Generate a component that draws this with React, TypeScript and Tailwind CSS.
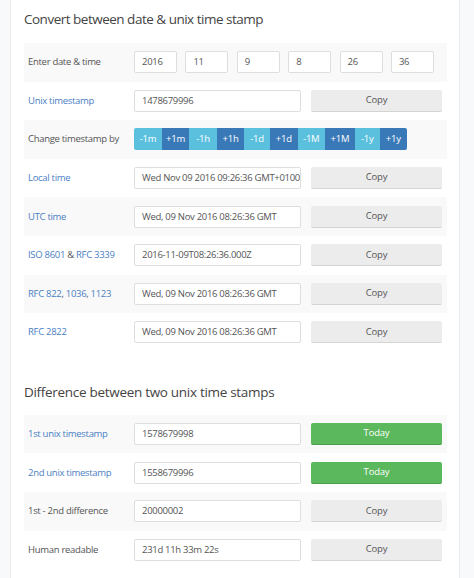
import React from 'react';

const font = { fontFamily: '"Open Sans", "Liberation Sans", sans-serif' };

const steps = [
  { label: '-1m', w: 'w-[28px]', dark: false },
  { label: '+1m', w: 'w-[27px]', dark: true },
  { label: '-1h', w: 'w-[28px]', dark: false },
  { label: '+1h', w: 'w-[27px]', dark: true },
  { label: '-1d', w: 'w-[26px]', dark: false },
  { label: '+1d', w: 'w-[27.5px]', dark: true },
  { label: '-1M', w: 'w-[27.5px]', dark: false },
  { label: '+1M', w: 'w-[30px]', dark: true },
  { label: '-1y', w: 'w-[24.5px]', dark: false },
  { label: '+1y', w: 'w-[27.5px]', dark: true },
];

const Row: React.FC<{ gray?: boolean; label: React.ReactNode; children: React.ReactNode }> = ({ gray, label, children }) => (
  <div className={`flex items-center h-[38.6px] ${gray ? 'bg-[#f9f9f9]' : 'bg-white'}`}>
    <div className="w-[110px] pl-[4px] text-[9.5px] tracking-[-0.3px] text-[#555] whitespace-nowrap">{label}</div>
    {children}
  </div>
);

const Field: React.FC<{ value: string }> = ({ value }) => (
  <div className="w-[167px] h-[22px] flex items-center pl-[7px] bg-white border border-[#dedede] rounded-[2px] text-[9.5px] tracking-[-0.3px] text-[#555] whitespace-nowrap overflow-hidden">
    {value}
  </div>
);

const Btn: React.FC<{ text: string; green?: boolean }> = ({ text, green }) => (
  <div
    className={`ml-[10px] w-[131px] h-[22px] flex items-center justify-center rounded-[2px] text-[9.5px] tracking-[-0.2px] border-b ${
      green ? 'bg-[#5cb85c] border-[#4a9d4a] text-white' : 'bg-[#ececec] border-[#d4d4d4] text-[#555]'
    }`}
  >
    {text}
  </div>
);

const A: React.FC<{ children: React.ReactNode }> = ({ children }) => (
  <span className="text-[#4a80c4]">{children}</span>
);

export default function App() {
  const dateParts = ['2016', '11', '9', '8', '26', '36'];
  return (
    <div className="min-h-[578px] bg-[#f8f9fb] pl-[10px]" style={font}>
      <div className="w-[450px] min-h-[578px] bg-white border-x border-[#ececec] pl-[13px] pr-[12px]">
        <h2 className="pt-[9px] h-[43px] text-[13.5px] tracking-[-0.5px] leading-[20px] text-[#444]">Convert between date &amp; unix time stamp</h2>
        <div>
          <Row gray label="Enter date & time">
            <div className="flex gap-[8.4px]">
              {dateParts.map((p, i) => (
                <div key={i} className="w-[43px] h-[22px] flex items-center pl-[7px] bg-white border border-[#dedede] rounded-[2px] text-[9.5px] tracking-[-0.3px] text-[#555]">
                  {p}
                </div>
              ))}
            </div>
          </Row>
          <Row label={<A>Unix timestamp</A>}>
            <Field value="1478679996" />
            <Btn text="Copy" />
          </Row>
          <Row gray label="Change timestamp by">
            <div className="flex h-[22px] rounded-[2px] overflow-hidden">
              {steps.map((s) => (
                <div
                  key={s.label}
                  className={`${s.w} flex items-center justify-center text-[9.5px] tracking-[-0.2px] text-white ${s.dark ? 'bg-[#3a79b8]' : 'bg-[#5bc0de]'}`}
                >
                  {s.label}
                </div>
              ))}
            </div>
          </Row>
          <Row label={<A>Local time</A>}>
            <Field value="Wed Nov 09 2016 09:26:36 GMT+0100" />
            <Btn text="Copy" />
          </Row>
          <Row gray label={<A>UTC time</A>}>
            <Field value="Wed, 09 Nov 2016 08:26:36 GMT" />
            <Btn text="Copy" />
          </Row>
          <Row label={<><A>ISO 8601</A> &amp; <A>RFC 3339</A></>}>
            <Field value="2016-11-09T08:26:36.000Z" />
            <Btn text="Copy" />
          </Row>
          <Row gray label={<><A>RFC 822</A>, <A>1036</A>, <A>1123</A></>}>
            <Field value="Wed, 09 Nov 2016 08:26:36 GMT" />
            <Btn text="Copy" />
          </Row>
          <Row label={<A>RFC 2822</A>}>
            <Field value="Wed, 09 Nov 2016 08:26:36 GMT" />
            <Btn text="Copy" />
          </Row>
        </div>

        <h2 className="pt-[30px] h-[63px] text-[13.5px] tracking-[-0.3px] leading-[20px] text-[#444]">Difference between two unix time stamps</h2>
        <div>
          <Row gray label={<A>1st unix timestamp</A>}>
            <Field value="1578679998" />
            <Btn text="Today" green />
          </Row>
          <Row label={<A>2nd unix timestamp</A>}>
            <Field value="1558679996" />
            <Btn text="Today" green />
          </Row>
          <Row gray label="1st - 2nd difference">
            <Field value="20000002" />
            <Btn text="Copy" />
          </Row>
          <Row label="Human readable">
            <Field value="231d 11h 33m 22s" />
            <Btn text="Copy" />
          </Row>
        </div>
      </div>
    </div>
  );
}
